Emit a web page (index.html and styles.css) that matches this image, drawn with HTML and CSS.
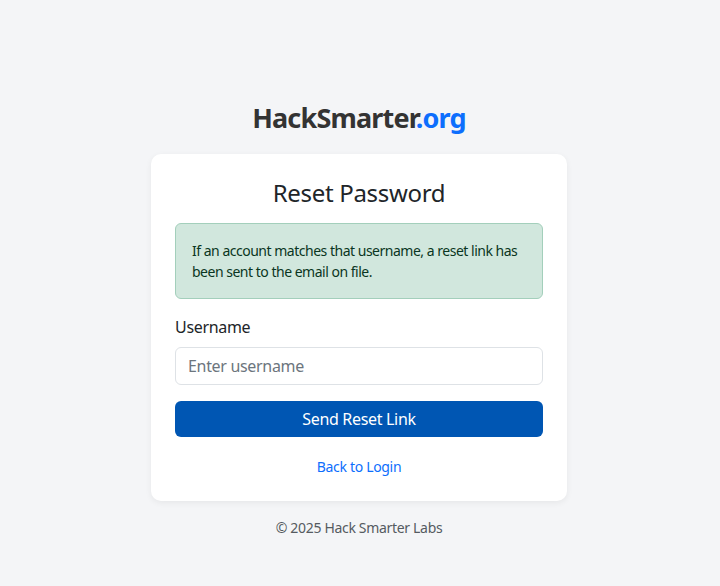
FILE: index.html
```html
<!DOCTYPE html>
<html lang="en">
<head>
<meta charset="utf-8">
<title>Reset Password - HackSmarter.org</title>
<link rel="stylesheet" href="styles.css">
</head>
<body>
<main class="page">
  <h1 class="brand">HackSmarter<span class="brand-tld">.org</span></h1>
  <section class="card">
    <h2 class="card-title">Reset Password</h2>
    <div class="alert">If an account matches that username, a reset link has been sent to the email on file.</div>
    <form class="form">
      <label class="label" for="username">Username</label>
      <input class="input" id="username" type="text" placeholder="Enter username">
      <button class="btn" type="button">Send Reset Link</button>
    </form>
    <div class="back"><a class="link" href="#">Back to Login</a></div>
  </section>
  <footer class="footer">© 2025 Hack Smarter Labs</footer>
</main>
</body>
</html>
```
FILE: styles.css
```css
html, body {
  margin: 0;
  padding: 0;
}
body {
  background: #f4f5f7;
  font-family: "Noto Sans", "Open Sans", sans-serif;
  color: #212529;
  letter-spacing: -0.02em;
}
.page {
  display: flex;
  flex-direction: column;
  align-items: center;
  padding-top: 101px;
  padding-right: 2px;
}
.brand {
  margin: 0 0 19px;
  font-size: 27px;
  line-height: 34px;
  font-weight: 700;
  letter-spacing: -0.03em;
  color: #333333;
}
.brand-tld {
  color: #0d6efd;
}
.card {
  box-sizing: border-box;
  width: 416px;
  background: #ffffff;
  border-radius: 10px;
  padding: 24px;
  box-shadow: 0 2px 6px rgba(0, 0, 0, 0.06);
}
.card-title {
  margin: 0 0 16px;
  font-size: 24px;
  line-height: 29px;
  font-weight: 400;
  text-align: center;
  color: #212529;
}
.alert {
  background: #d1e7dd;
  border: 1px solid #a3cfbb;
  border-radius: 6px;
  color: #0a3622;
  font-size: 14px;
  line-height: 21px;
  letter-spacing: -0.035em;
  padding: 16px;
  margin-bottom: 16px;
}
.form {
  display: flex;
  flex-direction: column;
}
.label {
  font-size: 16px;
  line-height: 24px;
  margin-bottom: 8px;
}
.input {
  box-sizing: border-box;
  height: 38px;
  width: 100%;
  border: 1px solid #dee2e6;
  border-radius: 6px;
  padding: 6px 12px;
  font-family: inherit;
  font-size: 16px;
  letter-spacing: inherit;
  color: #212529;
  margin-bottom: 16px;
}
.input::placeholder {
  color: #6c757d;
}
.btn {
  height: 36px;
  border: none;
  border-radius: 6px;
  background: #0056b3;
  color: #ffffff;
  font-family: inherit;
  font-size: 16px;
  letter-spacing: inherit;
  line-height: 24px;
  padding: 6px 12px;
}
.back {
  margin-top: 19px;
  text-align: center;
  font-size: 14px;
  line-height: 21px;
}
.link {
  color: #0d6efd;
  text-decoration: none;
}
.footer {
  margin-top: 16px;
  font-size: 14px;
  line-height: 21px;
  color: #555b61;
}
```
